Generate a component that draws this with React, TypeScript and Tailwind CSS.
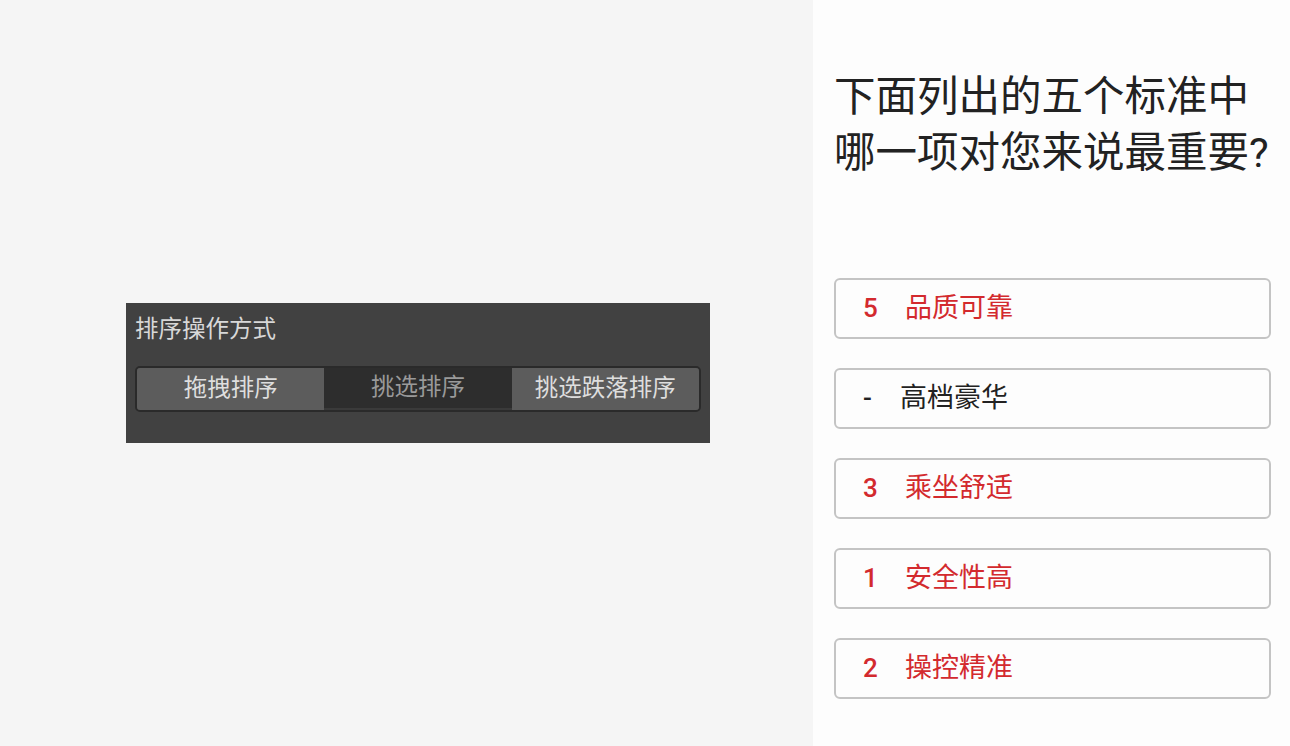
const options = [
    { rank: "5", label: "品质可靠", active: true },
    { rank: "-", label: "高档豪华", active: false },
    { rank: "3", label: "乘坐舒适", active: true },
    { rank: "1", label: "安全性高", active: true },
    { rank: "2", label: "操控精准", active: true },
];

const font = "font-['Roboto','Noto_Sans_CJK_SC',sans-serif]";

export default function App() {
    return (
        <div className={`flex w-[1290px] h-[746px] ${font}`}>
            {/* left: sort mode panel */}
            <div className="w-[813px] bg-[#f5f5f5] pl-[126px] pt-[303px]">
                <div className="w-[584px] h-[140px] bg-[#414141] px-[9px] pt-[12px]">
                    <div className="text-[23.5px] leading-[28px] text-[#d8d8d8]">排序操作方式</div>
                    <div className="mt-[23px] flex h-[46px] rounded-[5px] border-2 border-[#2a2a2a] overflow-hidden text-[23.5px]">
                        <div className="flex-1 flex items-center justify-center bg-[#5c5c5c] text-[#dedede]">拖拽排序</div>
                        <div className="flex-1 flex items-center justify-center bg-[#2d2d2d] text-[#9a9a9a] border-b-2 border-[#3a3a3a]">挑选排序</div>
                        <div className="flex-1 flex items-center justify-center bg-[#5c5c5c] text-[#dedede]">挑选跌落排序</div>
                    </div>
                </div>
            </div>

            {/* right: question */}
            <div className="flex-1 bg-[#fdfdfd] pl-[21px] pr-[19px] pt-[69px]">
                <h1 className="text-[41.5px] leading-[56px] text-[#222]">
                    下面列出的五个标准中
                    <br />
                    哪一项对您来说最重要?
                </h1>
                <div className="mt-[97px] flex flex-col gap-[29px]">
                    {options.map((o) => (
                        <div
                            key={o.label}
                            className={`flex items-center h-[61px] rounded-[6px] border-2 border-[#c4c4c4] pl-[27px] text-[27px] ${o.active ? "text-[#d32a2e]" : "text-[#222]"}`}
                        >
                            <span className="w-[37px] font-medium text-[26px]">{o.rank}</span>
                            <span className={o.active ? "ml-[5px]" : ""}>{o.label}</span>
                        </div>
                    ))}
                </div>
            </div>
        </div>
    );
}
